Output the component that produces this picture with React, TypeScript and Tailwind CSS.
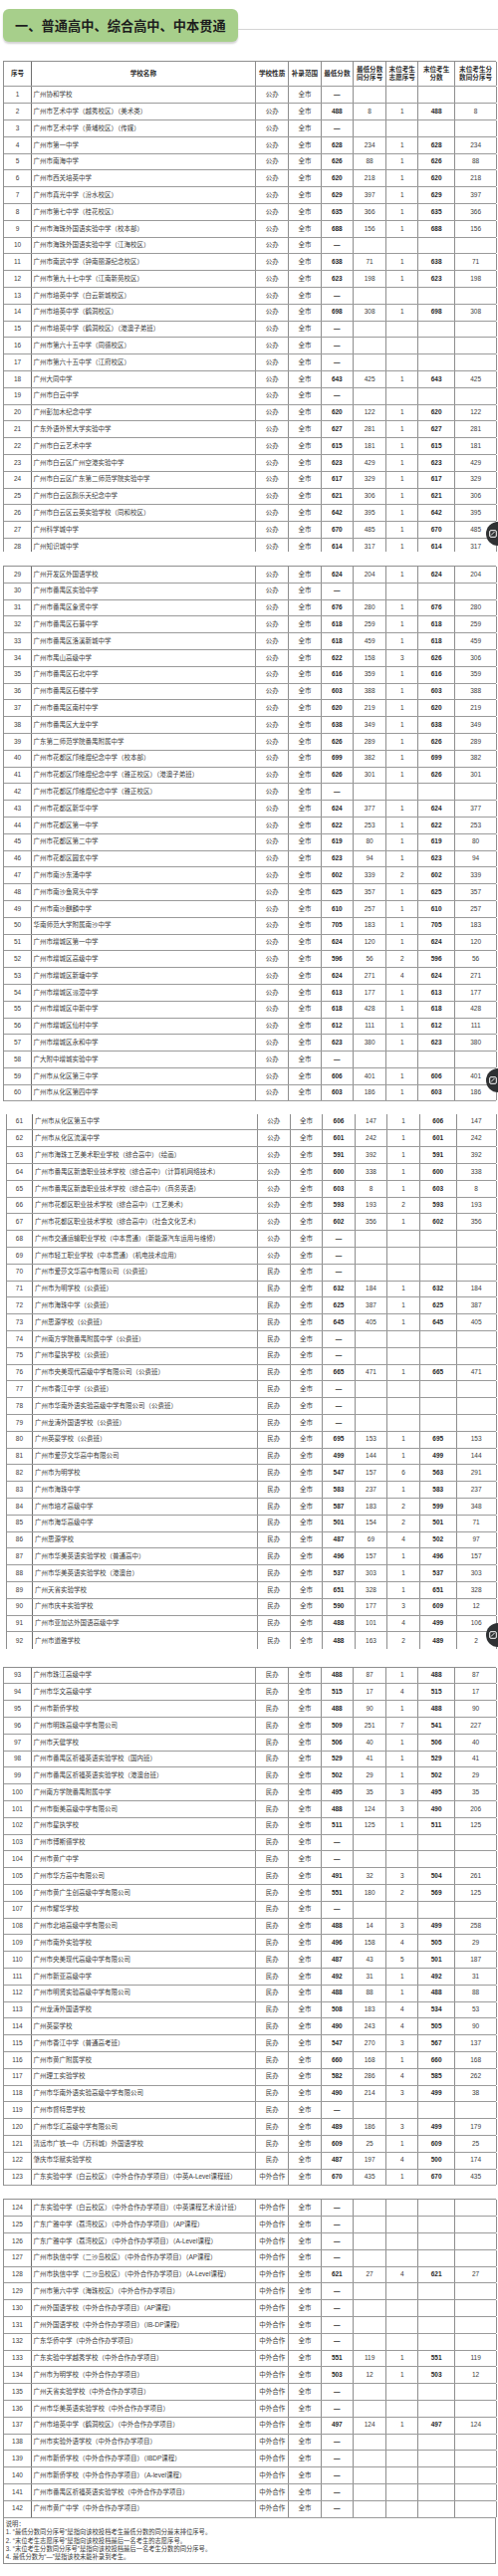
import React from 'react';

const G = '公办';
const M = '民办';
const Z = '中外合作';

type Row = [string, string, ...string[]];

const DATA: Row[] = [
  ['广州协和学校', G],
  ['广州市艺术中学（越秀校区）（美术类）', G, '488', '8', '1', '488', '8'],
  ['广州市艺术中学（黄埔校区）（传媒）', G],
  ['广州市第一中学', G, '628', '234', '1', '628', '234'],
  ['广州市南海中学', G, '626', '88', '1', '626', '88'],
  ['广州市西关培英中学', G, '620', '218', '1', '620', '218'],
  ['广州市真光中学（汾水校区）', G, '629', '397', '1', '629', '397'],
  ['广州市第七中学（桂花校区）', G, '635', '366', '1', '635', '366'],
  ['广州市海珠外国语实验中学（校本部）', G, '688', '156', '1', '688', '156'],
  ['广州市海珠外国语实验中学（江海校区）', G],
  ['广州市南武中学（钟南丽源纪念校区）', G, '638', '71', '1', '638', '71'],
  ['广州市第九十七中学（江南新苑校区）', G, '623', '198', '1', '623', '198'],
  ['广州市培英中学（白云新城校区）', G],
  ['广州市培英中学（鹤洞校区）', G, '698', '308', '1', '698', '308'],
  ['广州市培英中学（鹤洞校区）（港澳子弟班）', G],
  ['广州市第六十五中学（同德校区）', G],
  ['广州市第六十五中学（江府校区）', G],
  ['广州大同中学', G, '643', '425', '1', '643', '425'],
  ['广州市白云中学', G],
  ['广州彭加木纪念中学', G, '620', '122', '1', '620', '122'],
  ['广东外语外贸大学实验中学', G, '627', '281', '1', '627', '281'],
  ['广州市白云艺术中学', G, '615', '181', '1', '615', '181'],
  ['广州市白云区广州空港实验中学', G, '623', '429', '1', '623', '429'],
  ['广州市白云区广东第二师范学院实验中学', G, '617', '329', '1', '617', '329'],
  ['广州市白云区颜乐天纪念中学', G, '621', '306', '1', '621', '306'],
  ['广州市白云区云英实验学校（同和校区）', G, '642', '395', '1', '642', '395'],
  ['广州科学城中学', G, '670', '485', '1', '670', '485'],
  ['广州知识城中学', G, '614', '317', '1', '614', '317'],
  ['广州开发区外国语学校', G, '624', '204', '1', '624', '204'],
  ['广州市番禺区实验中学', G],
  ['广州市番禺区象贤中学', G, '676', '280', '1', '676', '280'],
  ['广州市番禺区石碁中学', G, '618', '259', '1', '618', '259'],
  ['广州市番禺区洛溪新城中学', G, '618', '459', '1', '618', '459'],
  ['广州市禺山高级中学', G, '622', '158', '3', '626', '306'],
  ['广州市番禺区石北中学', G, '616', '359', '1', '616', '359'],
  ['广州市番禺区石楼中学', G, '603', '388', '1', '603', '388'],
  ['广州市番禺区南村中学', G, '620', '219', '1', '620', '219'],
  ['广州市番禺区大龙中学', G, '638', '349', '1', '638', '349'],
  ['广东第二师范学院番禺附属中学', G, '626', '289', '1', '626', '289'],
  ['广州市花都区邝维煜纪念中学（校本部）', G, '699', '382', '1', '699', '382'],
  ['广州市花都区邝维煜纪念中学（雅正校区）（港澳子弟班）', G, '626', '301', '1', '626', '301'],
  ['广州市花都区邝维煜纪念中学（雅正校区）', G],
  ['广州市花都区新华中学', G, '624', '377', '1', '624', '377'],
  ['广州市花都区第一中学', G, '622', '253', '1', '622', '253'],
  ['广州市花都区第二中学', G, '619', '80', '1', '619', '80'],
  ['广州市花都区圆玄中学', G, '623', '94', '1', '623', '94'],
  ['广州市南沙东涌中学', G, '602', '339', '2', '602', '339'],
  ['广州市南沙鱼窝头中学', G, '625', '357', '1', '625', '357'],
  ['广州市南沙麒麟中学', G, '610', '257', '1', '610', '257'],
  ['华南师范大学附属南沙中学', G, '705', '183', '1', '705', '183'],
  ['广州市增城区第一中学', G, '624', '120', '1', '624', '120'],
  ['广州市增城区高级中学', G, '596', '56', '2', '596', '56'],
  ['广州市增城区新塘中学', G, '624', '271', '4', '624', '271'],
  ['广州市增城区派潭中学', G, '613', '177', '1', '613', '177'],
  ['广州市增城区中新中学', G, '618', '428', '1', '618', '428'],
  ['广州市增城区仙村中学', G, '612', '111', '1', '612', '111'],
  ['广州市增城区永和中学', G, '623', '380', '1', '623', '380'],
  ['广大附中增城实验中学', G],
  ['广州市从化区第三中学', G, '606', '401', '1', '606', '401'],
  ['广州市从化区第四中学', G, '603', '186', '1', '603', '186'],
  ['广州市从化区第五中学', G, '606', '147', '1', '606', '147'],
  ['广州市从化区流溪中学', G, '601', '242', '1', '601', '242'],
  ['广州市海珠工艺美术职业学校（综合高中）（绘画）', G, '591', '392', '1', '591', '392'],
  ['广州市番禺区新造职业技术学校（综合高中）（计算机网络技术）', G, '600', '338', '1', '600', '338'],
  ['广州市番禺区新造职业技术学校（综合高中）（商务英语）', G, '603', '8', '1', '603', '8'],
  ['广州市花都区职业技术学校（综合高中）（工艺美术）', G, '593', '193', '2', '593', '193'],
  ['广州市花都区职业技术学校（综合高中）（社会文化艺术）', G, '602', '356', '1', '602', '356'],
  ['广州市交通运输职业学校（中本贯通）（新能源汽车运用与维修）', G],
  ['广州市轻工职业学校（中本贯通）（机电技术应用）', G],
  ['广州市爱莎文华高中有限公司（公费班）', M],
  ['广州市为明学校（公费班）', M, '632', '184', '1', '632', '184'],
  ['广州市海珠中学（公费班）', M, '625', '387', '1', '625', '387'],
  ['广州思源学校（公费班）', M, '645', '405', '1', '645', '405'],
  ['广州南方学院番禺附属中学（公费班）', M],
  ['广州市星执学校（公费班）', M],
  ['广州市央美现代高级中学有限公司（公费班）', M, '665', '471', '1', '665', '471'],
  ['广州市香江中学（公费班）', M],
  ['广州市华南外语实验高级中学有限公司（公费班）', M],
  ['广州龙涛外国语学校（公费班）', M],
  ['广州英豪学校（公费班）', M, '695', '153', '1', '695', '153'],
  ['广州市爱莎文华高中有限公司', M, '499', '144', '1', '499', '144'],
  ['广州市为明学校', M, '547', '157', '6', '563', '291'],
  ['广州市海珠中学', M, '583', '237', '1', '583', '237'],
  ['广州市培才高级中学', M, '587', '183', '2', '599', '348'],
  ['广州市海华高级中学', M, '501', '154', '2', '501', '71'],
  ['广州思源学校', M, '487', '69', '4', '502', '97'],
  ['广州市华美英语实验学校（普通高中）', M, '496', '157', '1', '496', '157'],
  ['广州市华美英语实验学校（港澳台）', M, '537', '303', '1', '537', '303'],
  ['广州天省实验学校', M, '651', '328', '1', '651', '328'],
  ['广州市庆丰实验学校', M, '590', '177', '3', '609', '12'],
  ['广州市亚加达外国语高级中学', M, '488', '101', '4', '499', '106'],
  ['广州市道雅学校', M, '488', '163', '2', '489', '2'],
  ['广州市珠江高级中学', M, '488', '87', '1', '488', '87'],
  ['广州市华文高级中学', M, '515', '17', '4', '515', '17'],
  ['广州市新侨学校', M, '488', '90', '1', '488', '90'],
  ['广州市明珠高级中学有限公司', M, '509', '251', '7', '541', '227'],
  ['广州市天健学校', M, '506', '40', '1', '506', '40'],
  ['广州市番禺区祈福英语实验学校（国内班）', M, '529', '41', '1', '529', '41'],
  ['广州市番禺区祈福英语实验学校（港澳台班）', M, '502', '29', '1', '502', '29'],
  ['广州南方学院番禺附属中学', M, '495', '35', '3', '495', '35'],
  ['广州市衡美高级中学有限公司', M, '488', '124', '3', '490', '206'],
  ['广州市星执学校', M, '511', '125', '1', '511', '125'],
  ['广州市博斯德学校', M],
  ['广州市黄广中学', M],
  ['广州市华方高中有限公司', M, '491', '32', '3', '504', '261'],
  ['广州市黄广生创高级中学有限公司', M, '551', '180', '2', '569', '125'],
  ['广州市耀华学校', M],
  ['广州市北培高级中学有限公司', M, '488', '14', '3', '499', '258'],
  ['广州市南外实验学校', M, '496', '158', '4', '505', '29'],
  ['广州市央美现代高级中学有限公司', M, '487', '43', '5', '501', '187'],
  ['广州市新亚高级中学', M, '492', '31', '1', '492', '31'],
  ['广州市明贤实验高级中学有限公司', M, '488', '88', '1', '488', '88'],
  ['广州龙涛外国语学校', M, '508', '183', '4', '534', '53'],
  ['广州英豪学校', M, '490', '243', '4', '505', '90'],
  ['广州市香江中学（普通高考班）', M, '547', '270', '3', '567', '137'],
  ['广州市黄广附属学校', M, '660', '168', '1', '660', '168'],
  ['广州理工实验学校', M, '582', '286', '4', '585', '262'],
  ['广州市华南外语实验高级中学有限公司', M, '490', '214', '3', '499', '38'],
  ['广州市督特思学校', M],
  ['广州市华汇高级中学有限公司', M, '489', '186', '3', '499', '179'],
  ['清远市广铁一中（万科城）外国语学校', M, '609', '25', '1', '609', '25'],
  ['肇庆市华赋实验学校', M, '487', '197', '4', '500', '174'],
  ['广东实验中学（白云校区）（中外合作办学项目）（中英A-Level课程班）', Z, '670', '435', '1', '670', '435'],
  ['广东实验中学（白云校区）（中外合作办学项目）（中英课程艺术设计班）', Z],
  ['广东广雅中学（荔湾校区）（中外合作办学项目）（AP课程）', Z],
  ['广东广雅中学（荔湾校区）（中外合作办学项目）（A-Level课程）', Z],
  ['广州市执信中学（二沙岛校区）（中外合作办学项目）（AP课程）', Z],
  ['广州市执信中学（二沙岛校区）（中外合作办学项目）（A-Level课程）', Z, '621', '27', '4', '621', '27'],
  ['广州市第六中学（海珠校区）（中外合作办学项目）', Z],
  ['广州外国语学校（中外合作办学项目）（AP课程）', Z],
  ['广州外国语学校（中外合作办学项目）（IB-DP课程）', Z],
  ['广东华侨中学（中外合作办学项目）', Z],
  ['广东实验中学越秀学校（中外合作办学项目）', Z, '551', '119', '1', '551', '119'],
  ['广州市为明学校（中外合作办学项目）', Z, '503', '12', '1', '503', '12'],
  ['广州天省实验学校（中外合作办学项目）', Z],
  ['广州市华美英语实验学校（中外合作办学项目）', Z],
  ['广州市培英中学（鹤洞校区）（中外合作办学项目）', Z, '497', '124', '1', '497', '124'],
  ['广州市实验外语学校（中外合作办学项目）', Z],
  ['广州市新侨学校（中外合作办学项目）（IBDP课程）', Z],
  ['广州市新侨学校（中外合作办学项目）（A-level课程）', Z],
  ['广州市番禺区祈福英语实验学校（中外合作办学项目）', Z],
  ['广州市黄广中学（中外合作办学项目）', Z],
];

const GRID_A =
  'grid grid-cols-[27.4px_225.3px_33.3px_32.4px_32.3px_33.3px_32px_36.7px_42.3px]';
const GRID_B =
  'grid grid-cols-[26.6px_225.4px_33.3px_32.3px_32.4px_32.6px_32.7px_36.7px_40px]';

const FONT = "font-['Liberation_Sans','Noto_Sans_CJK_SC',sans-serif]";

function Cell({
  children,
  className = '',
}: {
  children?: React.ReactNode;
  className?: string;
}) {
  return (
    <div
      className={
        'flex items-center justify-center border-r border-[#8e8e8e] overflow-hidden whitespace-nowrap ' +
        className
      }
    >
      {children}
    </div>
  );
}

function DataRow({ i, grid, last }: { i: number; grid: string; last: boolean }) {
  const r = DATA[i - 1];
  const [name, type, min, minRank, vol, lastScore, lastRank] = r;
  return (
    <div
      className={
        grid +
        ' h-[16.8px] text-[6.5px] leading-none text-[#3c3c3c] ' +
        (last ? '' : 'border-b border-[#9a9a9a]')
      }
    >
      <Cell className="border-r-[#6e6e6e]">{i}</Cell>
      <Cell className="justify-start pl-[1.7px]">{name}</Cell>
      <Cell>{type}</Cell>
      <Cell>全市</Cell>
      <Cell className="font-bold text-[#2a2a2a]">{min ?? '—'}</Cell>
      <Cell>{minRank ?? ''}</Cell>
      <Cell>{vol ?? ''}</Cell>
      <Cell className="font-bold text-[#2a2a2a]">{lastScore ?? ''}</Cell>
      <Cell>{lastRank ?? ''}</Cell>
    </div>
  );
}

function HeaderRow({ grid }: { grid: string }) {
  return (
    <div
      className={
        grid +
        ' h-[25.5px] text-[6.6px] leading-[8.2px] font-bold text-[#2e2e2e] text-center border-b border-[#9a9a9a]'
      }
    >
      <Cell className="border-r-[#6e6e6e]">序号</Cell>
      <Cell>学校名称</Cell>
      <Cell>学校性质</Cell>
      <Cell>补录范围</Cell>
      <Cell>最低分数</Cell>
      <Cell>
        最低分数
        <br />
        同分序号
      </Cell>
      <Cell>
        末位考生
        <br />
        志愿序号
      </Cell>
      <Cell>
        末位考生
        <br />
        分数
      </Cell>
      <Cell>
        末位考生分
        <br />
        数同分序号
      </Cell>
    </div>
  );
}

function range(a: number, b: number) {
  const out: number[] = [];
  for (let k = a; k <= b; k++) out.push(k);
  return out;
}

function Segment({
  from,
  to,
  grid,
  className,
  header,
  lastBorder,
}: {
  from: number;
  to: number;
  grid: string;
  className: string;
  header?: boolean;
  lastBorder: boolean;
}) {
  return (
    <div className={'border-l border-[#8e8e8e] ' + className}>
      {header && <HeaderRow grid={grid} />}
      {range(from, to).map((i) => (
        <DataRow key={i} i={i} grid={grid} last={i === to && !lastBorder} />
      ))}
    </div>
  );
}

function EdgeButton({ className }: { className: string }) {
  return (
    <div
      className={
        'absolute right-[-12px] w-[24px] h-[24px] rounded-full bg-[#2f3133] flex items-center justify-start pl-[3px] ' +
        className
      }
    >
      <svg width="8" height="8" viewBox="0 0 8 8" fill="none">
        <rect x="0.7" y="0.7" width="6.6" height="6.6" rx="1.2" stroke="#fff" strokeWidth="1" />
        <path d="M2 5.5 L5.5 2" stroke="#fff" strokeWidth="0.9" />
      </svg>
    </div>
  );
}

export default function App() {
  return (
    <div className={'relative w-[500px] min-h-[2587px] bg-white overflow-hidden ' + FONT}>
      {/* Title */}
      <div className="flex pt-[9px]">
        <div className="ml-[3px] w-[236px] h-[33.4px] rounded-[6px] bg-[#a7cf8b] shadow-[0_2px_2px_rgba(0,0,0,0.18)] flex items-center pl-[12px]">
          <span className="text-[13.2px] font-bold tracking-[0.05px] text-[#1d1d1d] font-['Noto_Sans_CJK_SC',sans-serif]">
            一、普通高中、综合高中、中本贯通
          </span>
        </div>
        <div className="flex-1 h-px bg-[#d4d4d4] mt-[20px]" />
      </div>

      {/* Segment 1 (clipped) */}
      <div className="mt-[18.6px] h-[493px] overflow-hidden">
        <Segment
          from={1}
          to={28}
          grid={GRID_A}
          header
          lastBorder={false}
          className="ml-[3.3px] w-[495px] border-t"
        />
      </div>

      {/* Segment 2 */}
      <Segment
        from={29}
        to={60}
        grid={GRID_A}
        lastBorder
        className="mt-[14px] ml-[3.3px] w-[495px] border-t"
      />

      {/* Segment 3 */}
      <Segment
        from={61}
        to={92}
        grid={GRID_B}
        lastBorder={false}
        className="mt-[12.2px] ml-[5.7px] w-[492px]"
      />

      {/* Segment 4 */}
      <Segment
        from={93}
        to={123}
        grid={GRID_A}
        lastBorder
        className="mt-[17.5px] ml-[3.3px] w-[495px] border-t"
      />

      {/* Segment 5 */}
      <div className="mt-[13px] ml-[3.3px] w-[495px]">
        <Segment from={124} to={142} grid={GRID_A} lastBorder className="border-t" />
        <div className="h-[46px] border-l border-r border-b border-[#8e8e8e] pl-[1.5px] pt-[2.5px] text-[6.3px] leading-[8.3px] text-[#3c3c3c]">
          <div>说明：</div>
          <div>1. “最低分数同分序号”是指向该校投档考生最低分数的同分最末排位序号。</div>
          <div>2. “末位考生志愿序号”是指向该校投档最后一名考生的志愿序号。</div>
          <div>3. “末位考生分数同分序号”是指向该校投档最后一名考生分数的同分序号。</div>
          <div>4. 最低分数为“—”是指该校未能补录到考生。</div>
        </div>
      </div>

      {/* Floating edge buttons (overlay) */}
      <EdgeButton className="top-[524px]" />
      <EdgeButton className="top-[1073px]" />
      <EdgeButton className="top-[1630px]" />
    </div>
  );
}
